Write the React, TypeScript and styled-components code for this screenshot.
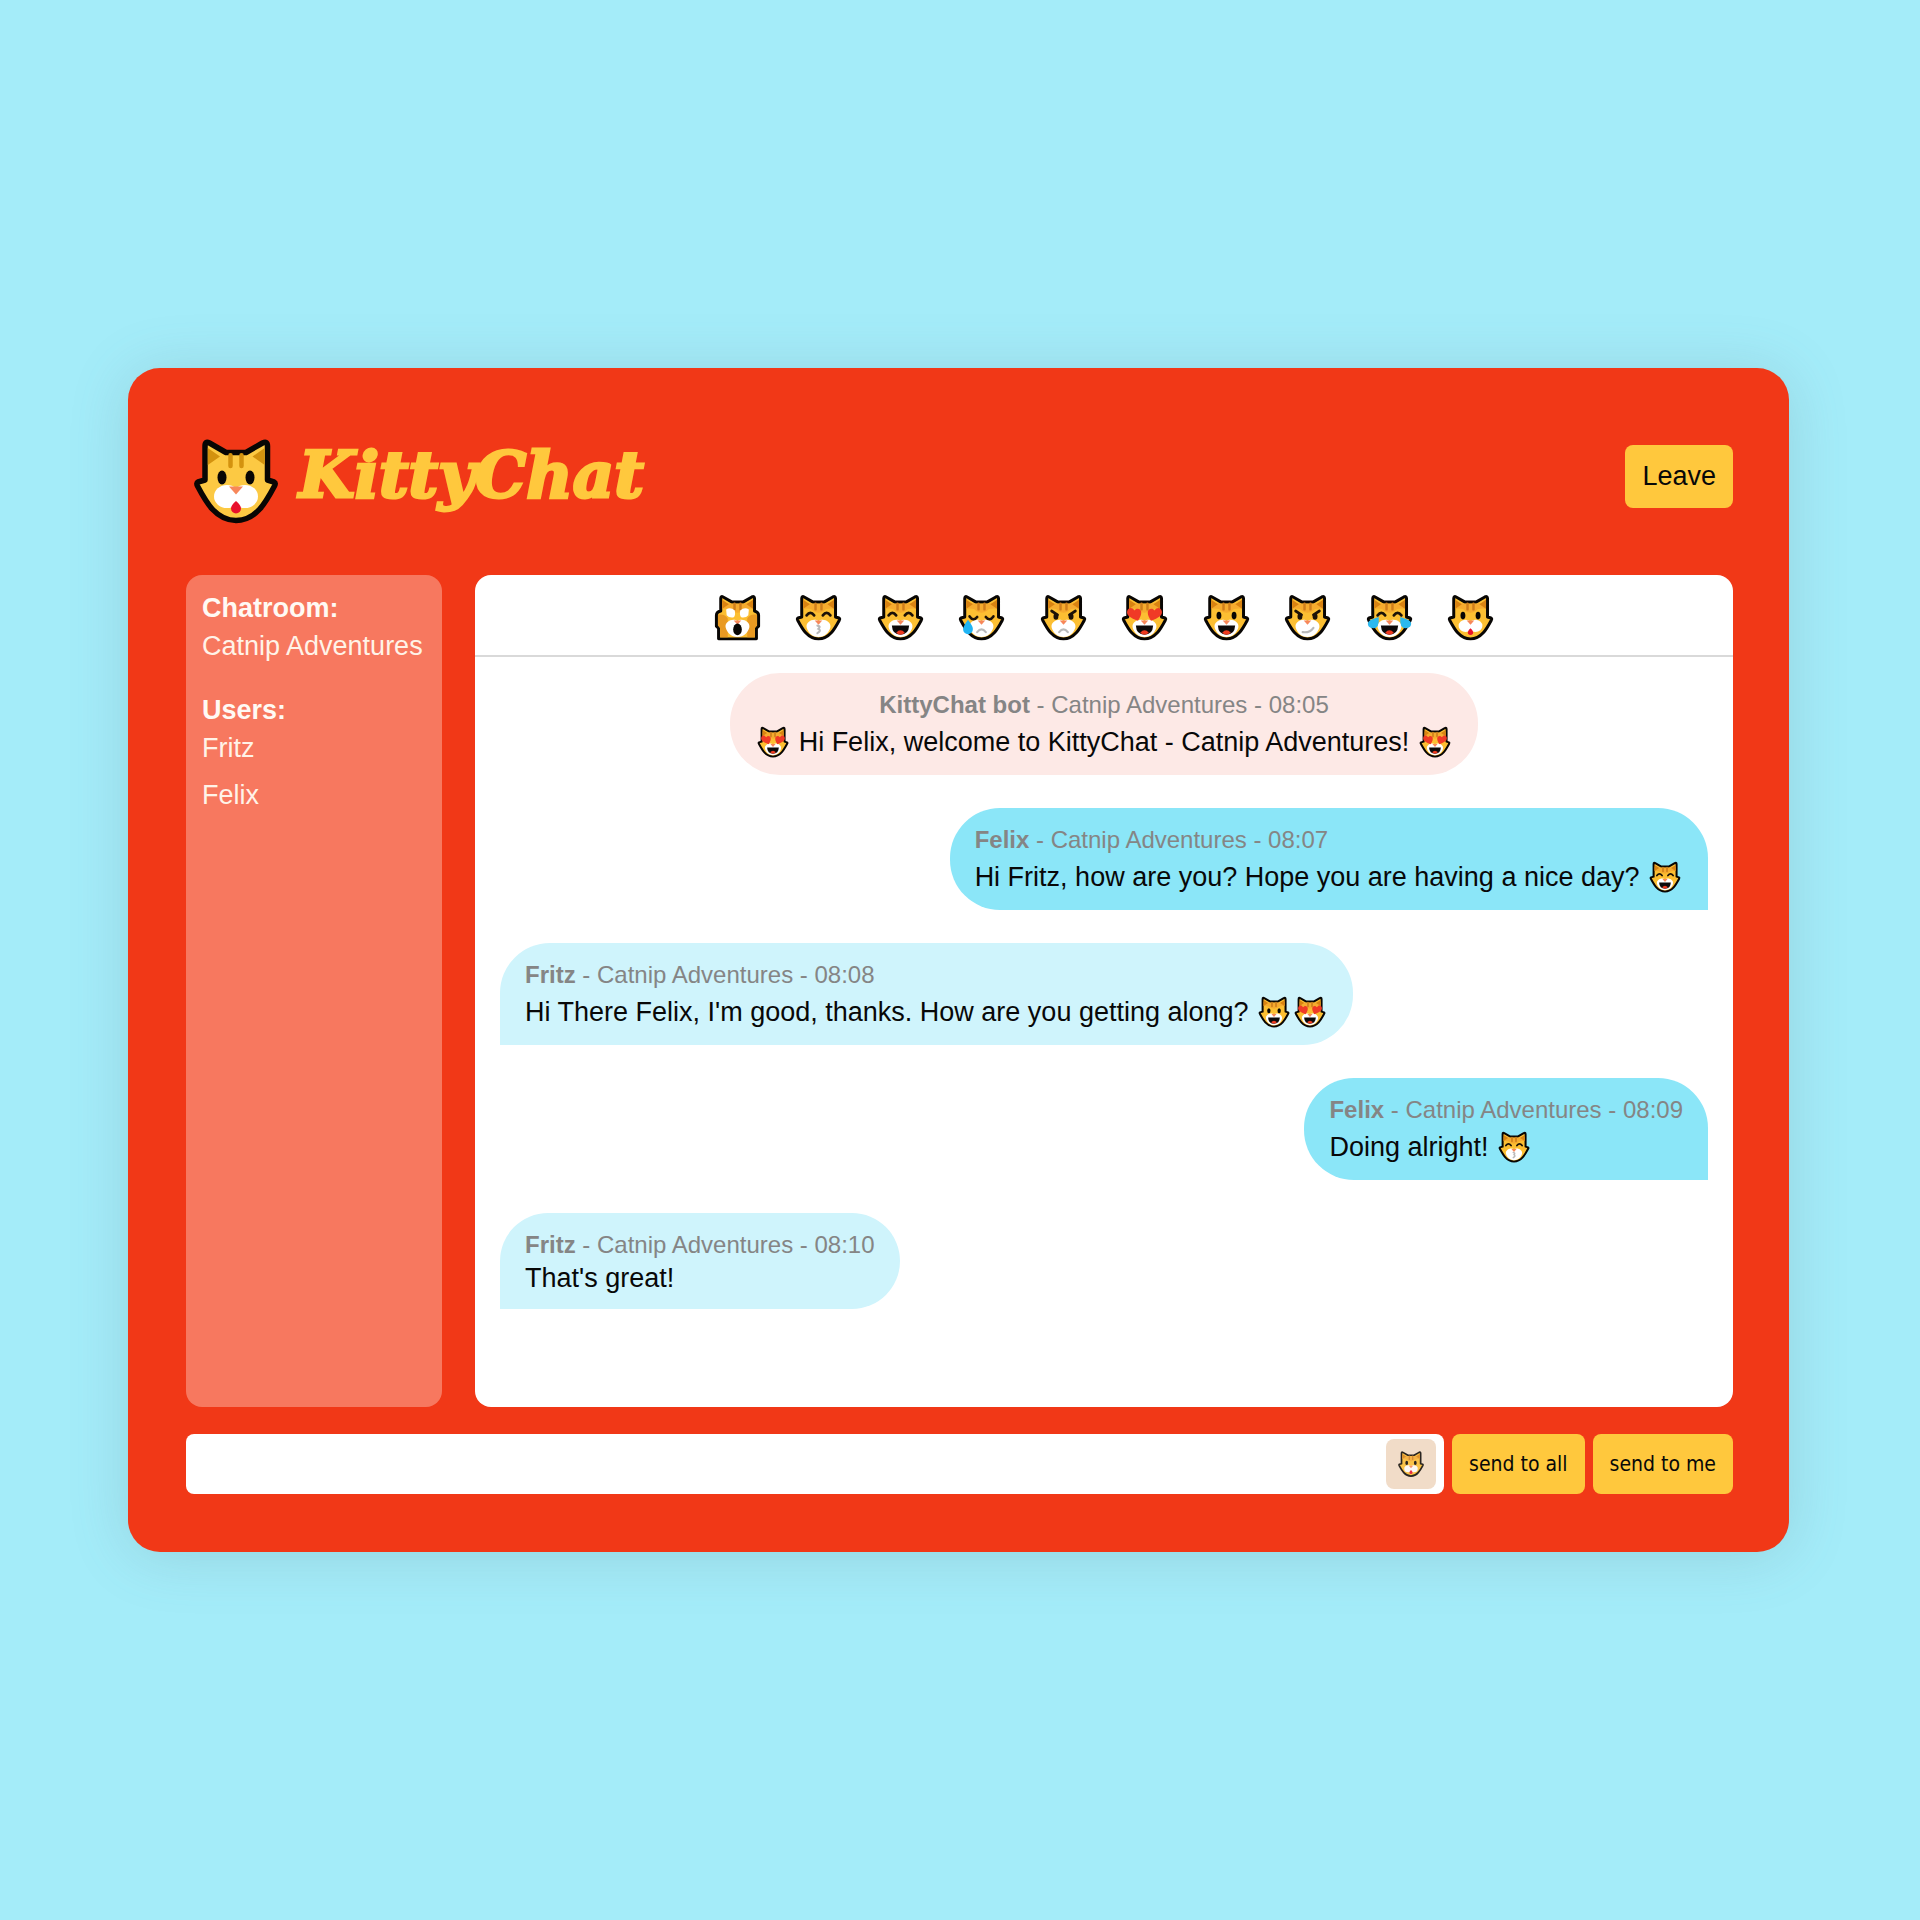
import React from "react";
import styled, { createGlobalStyle, css } from "styled-components";

type Mood =
  | "plain" | "scream" | "kiss" | "grin" | "cry" | "pout" | "love" | "smile" | "smirk" | "joy";

const GlobalStyle = createGlobalStyle`
  *, *::before, *::after { box-sizing: border-box; }
  body {
    margin: 0;
    background: #a4ecf9;
    color: #080808;
    font: 27px/31px "Liberation Sans", Arial, sans-serif;
  }
  button, input { font: inherit; color: inherit; border: 0; }
`;

const Page = styled.div`
  min-height: 100vh;
  display: flex;
  align-items: center;
  padding: 40px 131px 40px 128px;
`;

const Card = styled.main`
  flex: 1;
  min-width: 0;
  display: flex;
  flex-direction: column;
  padding: 56px 56px 58px 58px;
  border-radius: 32px;
  background: #f13817;
  box-shadow: 0 4px 60px rgba(90, 110, 120, 0.2);
`;

const Header = styled.header`
  display: flex;
  align-items: center;
  justify-content: space-between;
  height: 104px;
  margin-bottom: 47px;
`;

const Brand = styled.h1`
  display: flex;
  align-items: center;
  gap: 14px;
  margin: 0;
  padding: 9px 0 0 1px;
  color: #ffc83d;
  font: italic bold 64px/72px "DejaVu Serif", serif;
  -webkit-text-stroke: 3px #ffc83d;
`;

const BrandName = styled.span`
  padding-bottom: 12px;
`;

const ActionButton = styled.button<{ $compact?: boolean }>`
  padding: 16px 17px;
  border-radius: 8px;
  background: #ffc83d;
  cursor: pointer;
  ${(p) =>
    p.$compact &&
    css`
      font-family: "DejaVu Sans Condensed", "DejaVu Sans", sans-serif;
      font-size: 21px;
      line-height: 28px;
    `}
`;

const Workspace = styled.div`
  display: flex;
  gap: 33px;
  min-height: 832px;
`;

const Sidebar = styled.aside`
  flex: 0 0 256px;
  padding: 18px 16px;
  border-radius: 16px;
  background: #f7785f;
  color: #fff3e8;
`;

const SideTitle = styled.h2`
  margin: 0 0 7px;
  color: #fffaf4;
  font-size: 27px;
  line-height: 31px;
`;

const SideText = styled.p`
  margin: 0 0 33px;
`;

const UserList = styled.ul`
  margin: 0;
  padding: 0;
  list-style: none;
  display: flex;
  flex-direction: column;
  gap: 16px;
`;

const Chat = styled.section`
  flex: 1;
  min-width: 0;
  border-radius: 16px;
  background: #fff;
`;

const EmojiBar = styled.div`
  display: flex;
  justify-content: center;
  padding: 16px 0 11px;
  border-bottom: 2px solid #d9d9d9;
`;

const EmojiRow = styled.div`
  display: flex;
  justify-content: space-between;
  width: 786px;
`;

const EmojiButton = styled.button`
  display: block;
  padding: 0;
  background: none;
  cursor: pointer;
  svg { display: block; }
`;

const Messages = styled.div`
  display: flex;
  flex-direction: column;
  gap: 33px;
  padding: 16px 25px;
`;

type Side = "bot" | "me" | "other";

const sideStyles = {
  bot: css`
    align-self: center;
    text-align: center;
    border-radius: 50px;
    background: #fde9e6;
  `,
  me: css`
    align-self: flex-end;
    border-radius: 50px 50px 0 50px;
    background: #8be6f8;
  `,
  other: css`
    align-self: flex-start;
    border-radius: 50px 50px 50px 0;
    background: #cff4fc;
  `,
};

const Bubble = styled.article<{ $side: Side }>`
  padding: 16px 25px 15px;
  ${(p) => sideStyles[p.$side]}
`;

const Meta = styled.div`
  margin-bottom: 3px;
  color: #858585;
  font-size: 24px;
`;

const Body = styled.div`
  svg {
    margin-top: 1px;
    vertical-align: -9px;
  }
`;

const Composer = styled.form`
  display: flex;
  gap: 8px;
  margin-top: 27px;
`;

const Field = styled.div`
  flex: 1;
  display: flex;
  align-items: center;
  gap: 8px;
  padding: 5px 8px;
  border-radius: 8px;
  background: #fff;
`;

const TextInput = styled.input`
  flex: 1;
  min-width: 0;
  padding: 8px;
  background: transparent;
  outline: none;
`;

const PickerButton = styled.button`
  display: grid;
  place-items: center;
  width: 50px;
  height: 50px;
  padding: 0;
  border-radius: 8px;
  background: #f1dcc8;
  cursor: pointer;
  svg { opacity: 0.85; }
`;

const HEAD =
  "M11 41V7Q11 1.500 15.500 4L32 13.500H52L68.500 4Q73.500 1.500 73.500 7V41L80 43Q82 44 80.500 47C72 63 62 81.500 42 81.500S12 63 3.500 47Q2 44 4 43Z";
const HANDS =
  "M11 30V7Q11 1.500 15.500 4L32 13.500H52L68.500 4Q73.500 1.500 73.500 7V30Q81 32 81 38V58L77 62V81.500H7V62L3 58V38Q3 32 11 30Z";

const dark = { stroke: "#1c1208", strokeWidth: 5, strokeLinecap: "round" as const, fill: "none" };
const grey = { stroke: "#b9b9b9", strokeWidth: 4, strokeLinecap: "round" as const, fill: "none" };

function Eyes({ mood }: { mood: Mood }) {
  switch (mood) {
    case "scream":
      return (
        <path
          d="M21 27Q29 22 37 29Q39 40 34 42Q26 43 22 38ZM63 27Q55 22 47 29Q45 40 50 42Q58 43 62 38Z"
          fill="#fff"
        />
      );
    case "kiss":
    case "grin":
    case "joy":
      return <path d="M20 38Q27 29 34 38M50 38Q57 29 64 38" {...dark} />;
    case "cry":
      return <path d="M20 40Q27 50 34 41M50 41Q57 50 64 40" {...dark} />;
    case "pout":
    case "smirk":
      return (
        <g>
          <path d="M20 30L31 37M64 30L53 37" {...dark} />
          <ellipse cx="28" cy="40" rx="4.500" ry="6" fill="#1c1208" />
          <ellipse cx="56" cy="40" rx="4.500" ry="6" fill="#1c1208" />
        </g>
      );
    case "love":
      return (
        <g fill="#f03a26">
          <path d="M30 48C16 43 8 38 10 30C12 23 20 23 23 29C28 23 36 26 36 33C36 38 33 43 30 48Z" />
          <path d="M54 48C68 43 76 38 74 30C72 23 64 23 61 29C56 23 48 26 48 33C48 38 51 43 54 48Z" />
        </g>
      );
    default:
      return (
        <g fill="#080604">
          <ellipse cx="28" cy="38.500" rx="4.500" ry="7" />
          <ellipse cx="56" cy="38.500" rx="4.500" ry="7" />
        </g>
      );
  }
}

function Mouth({ mood }: { mood: Mood }) {
  switch (mood) {
    case "plain":
      return <path d="M42 62Q47 66 47 69.500A5 5 0 0 1 37 69.500Q37 66 42 62Z" fill="#e8112d" />;
    case "scream":
      return <ellipse cx="42" cy="64" rx="8" ry="11" fill="#080604" />;
    case "kiss":
      return <path d="M40 57Q47 58 42 63Q48 66 40 71" {...grey} />;
    case "cry":
    case "pout":
      return <path d="M34 69Q42 59 50 69" {...grey} />;
    case "smirk":
      return <path d="M33 69Q46 71 53 61" {...grey} />;
    default:
      return (
        <g>
          <path d="M26 57H58Q57 74 42 74T26 57Z" fill="#0d0a0a" />
          <path d="M34 70Q42 61 50 70Q46 74 42 74T34 70Z" fill="#ee3a1f" />
        </g>
      );
  }
}

function Cat({ mood = "plain", size, warm = true }: { mood?: Mood; size: number; warm?: boolean }) {
  const scream = mood === "scream";
  const plain = mood === "plain";
  return (
    <svg width={size} height={size} viewBox="-7 -7 98 98" aria-hidden="true">
      <path d={scream ? HANDS : HEAD} fill={warm ? "#fcbf32" : "#fcc943"} stroke="#080604" strokeWidth="5.500" strokeLinejoin="round" />
      {warm && <path d="M14 14L32 16.500H52L70.500 14V26Q56 24 52 30Q42 36 32 30Q28 24 14 26Z" fill="#f6ab2e" />}
      <path d="M13.800 9L26 17.500L13.800 26ZM70.700 9L58.500 17.500L70.700 26Z" fill={warm ? "#d98312" : "#d3920f"} />
      <path d="M36.500 16.300V27M47.500 16.300V27" stroke={warm ? "#cf7f1c" : "#d3920f"} strokeWidth="4.500" strokeLinecap="round" />
      {scream && <path d="M6 37Q18 34 24 44V78.500H10V62L6 57ZM78 37Q66 34 60 44V78.500H74V62L78 57Z" fill="#e99a22" />}
      {plain ? (
        <g fill="#fff">
          <ellipse cx="33" cy="57.500" rx="13" ry="11.500" />
          <ellipse cx="51" cy="57.500" rx="13" ry="11.500" />
        </g>
      ) : (
        <path d="M42 49C50 42 66 50 64 60C62 69 54 78 42 78S22 69 20 60C18 50 34 42 42 49Z" fill="#fff" />
      )}
      <Eyes mood={mood} />
      <path d="M35 47.500H49L42 55.500Z" fill="#f7875a" />
      <Mouth mood={mood} />
      {mood === "cry" && <path d="M17 46Q27 59 26 64A9 9 0 0 1 8 64Q8 58 17 46Z" fill="#1fb4f4" />}
      {mood === "joy" && (
        <path d="M22 41Q24 62 12 62Q1 61 2 52Q4 46 22 41ZM62 41Q60 62 72 62Q83 61 82 52Q80 46 62 41Z" fill="#2cb9ee" />
      )}
    </svg>
  );
}

const moods: Mood[] = ["scream", "kiss", "grin", "cry", "pout", "love", "smile", "smirk", "joy", "plain"];

const messages: { side: Side; name: string; time: string; body: React.ReactNode }[] = [
  {
    side: "bot", name: "KittyChat bot", time: "08:05",
    body: <><Cat mood="love" size={36} /> Hi Felix, welcome to KittyChat - Catnip Adventures! <Cat mood="love" size={36} /></>,
  },
  {
    side: "me", name: "Felix", time: "08:07",
    body: <>Hi Fritz, how are you? Hope you are having a nice day? <Cat mood="grin" size={36} /></>,
  },
  {
    side: "other", name: "Fritz", time: "08:08",
    body: <>Hi There Felix, I'm good, thanks. How are you getting along? <Cat mood="smile" size={36} /><Cat mood="love" size={36} /></>,
  },
  { side: "me", name: "Felix", time: "08:09", body: <>Doing alright! <Cat mood="kiss" size={36} /></> },
  { side: "other", name: "Fritz", time: "08:10", body: "That's great!" },
];

export default function App() {
  return (
    <Page>
      <GlobalStyle />
      <Card>
        <Header>
          <Brand>
            <Cat size={98} warm={false} />
            <BrandName>KittyChat</BrandName>
          </Brand>
          <ActionButton type="button">Leave</ActionButton>
        </Header>
        <Workspace>
          <Sidebar>
            <SideTitle>Chatroom:</SideTitle>
            <SideText>Catnip Adventures</SideText>
            <SideTitle>Users:</SideTitle>
            <UserList>
              <li>Fritz</li>
              <li>Felix</li>
            </UserList>
          </Sidebar>
          <Chat>
            <EmojiBar>
              <EmojiRow>
                {moods.map((mood) => (
                  <EmojiButton key={mood} type="button" aria-label={mood}>
                    <Cat mood={mood} size={53} />
                  </EmojiButton>
                ))}
              </EmojiRow>
            </EmojiBar>
            <Messages>
              {messages.map((m) => (
                <Bubble key={m.time} $side={m.side}>
                  <Meta><b>{m.name}</b> - Catnip Adventures - {m.time}</Meta>
                  <Body>{m.body}</Body>
                </Bubble>
              ))}
            </Messages>
          </Chat>
        </Workspace>
        <Composer onSubmit={(e) => e.preventDefault()}>
          <Field>
            <TextInput type="text" aria-label="Message" />
            <PickerButton type="button" aria-label="Pick an emoji">
              <Cat size={30} />
            </PickerButton>
          </Field>
          <ActionButton $compact type="submit">send to all</ActionButton>
          <ActionButton $compact type="button">send to me</ActionButton>
        </Composer>
      </Card>
    </Page>
  );
}
